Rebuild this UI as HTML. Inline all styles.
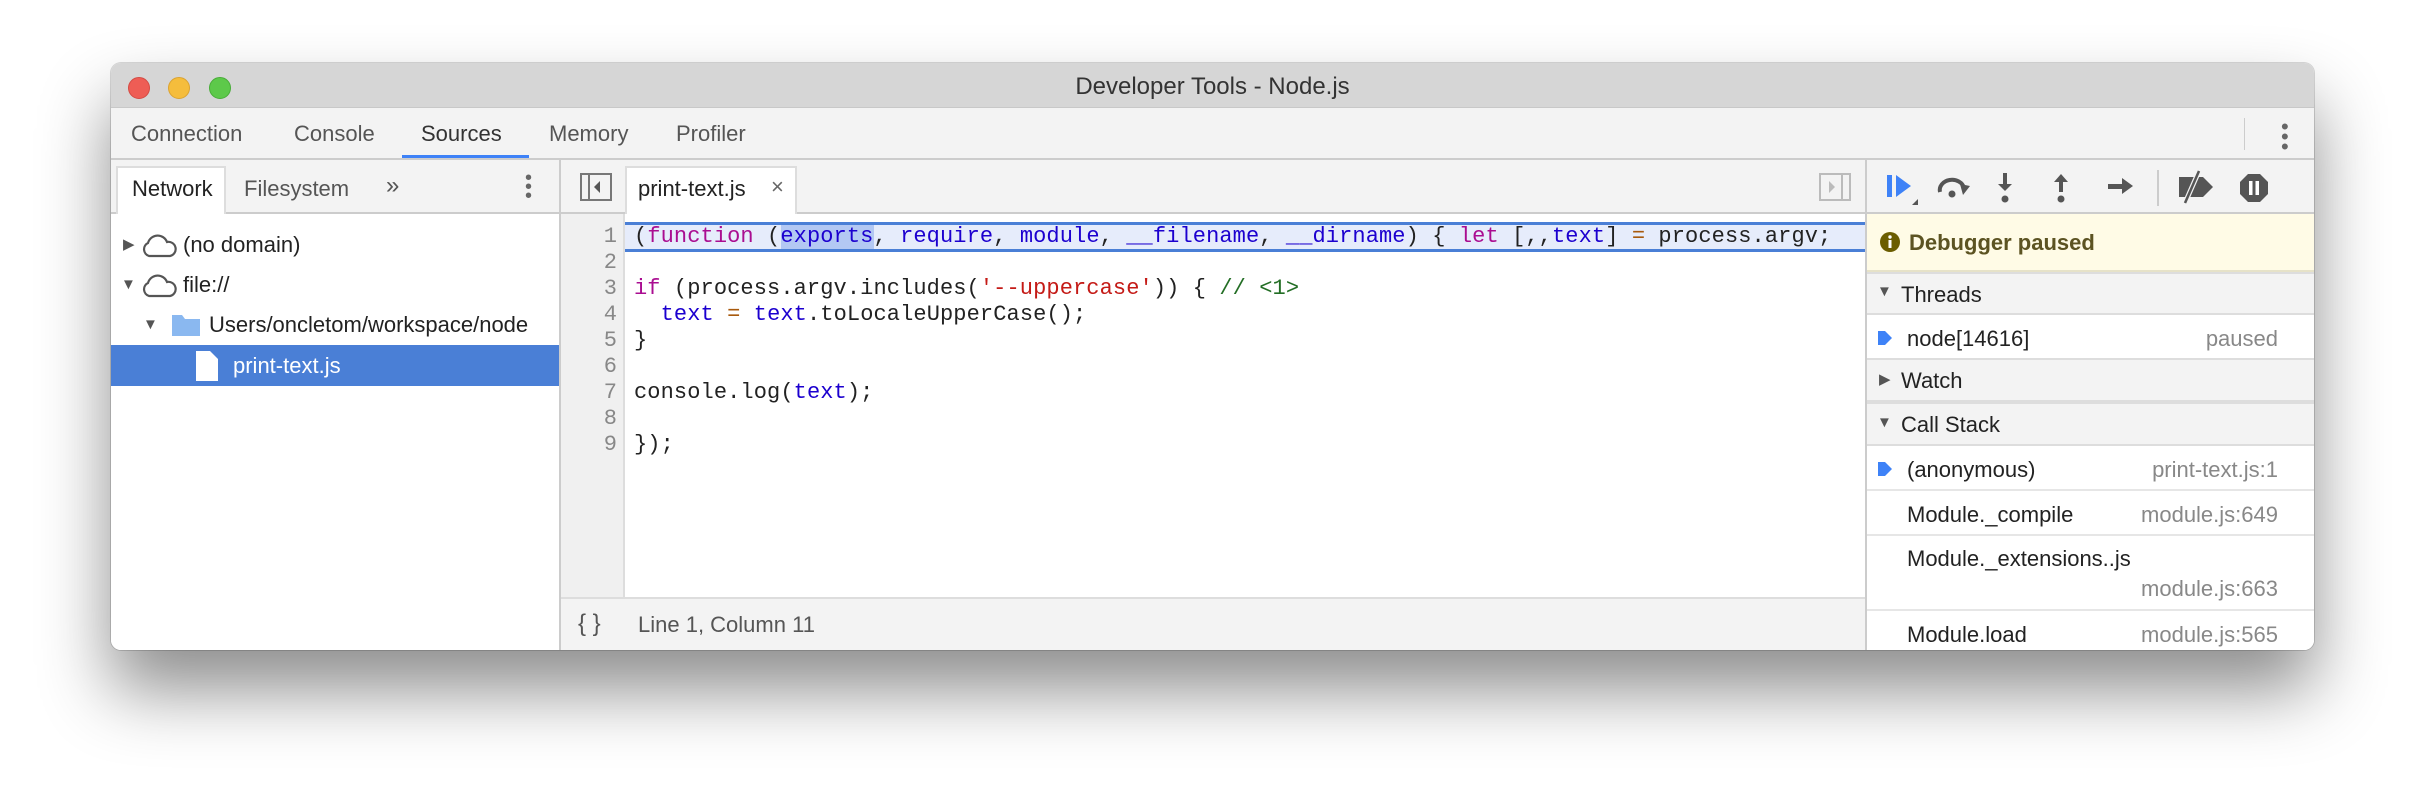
<!DOCTYPE html>
<html><head><style>
*{margin:0;padding:0;box-sizing:border-box}
body{width:2426px;height:810px;background:#fff;position:relative;overflow:hidden;font-family:"Liberation Sans",sans-serif;color:#222}
.win{position:absolute;left:111px;top:63px;width:2203px;height:587px;border-radius:10px;overflow:hidden;background:#fff;box-shadow:0 40px 70px rgba(0,0,0,.45),0 0 0 1px rgba(0,0,0,.15)}
.abs{position:absolute}
.title{left:0;top:0;width:100%;height:45px;background:#d6d6d6;border-bottom:1px solid #c8c8c8}
.dot{position:absolute;top:14px;width:22px;height:22px;border-radius:50%}
.tabs{left:0;top:45px;width:100%;height:52px;background:#f3f3f3;border-bottom:2px solid #ccc;font-size:22px;color:#555}
.tabs span{position:absolute;top:13px}
.side{left:0;top:97px;width:450px;height:490px;border-right:2px solid #ccc;background:#fff}
.stb{left:0;top:0;width:100%;height:54px;background:#f3f3f3;border-bottom:2px solid #ccc;font-size:22px}
.row{position:absolute;left:0;width:100%;height:41px;font-size:22px;line-height:41px}
.ed{left:450px;top:97px;width:1304px;height:490px;background:#fff}
.code{font-family:"Liberation Mono",monospace;font-size:22px;letter-spacing:0.1px;line-height:26px;white-space:pre}
.k{color:#aa0d91}.v{color:#1c00cf}.s{color:#c41a16}.c{color:#236e25}.o{color:#a85a0d}
.rp{left:1754px;top:97px;width:449px;height:490px;border-left:2px solid #ccc;background:#fff;font-size:22px}
.hdr{position:absolute;left:0;width:100%;background:#f3f3f3;border-bottom:2px solid #ddd;border-top:2px solid #ddd}
.it{position:absolute;left:0;width:100%;background:#fff;border-bottom:2px solid #e6e6e6}
.gr{color:#888}
</style></head><body>
<div class="win">
  <div class="abs title">
    <div class="dot" style="left:17px;background:#ee5d55;border:1px solid #d44b43"></div>
    <div class="dot" style="left:57px;background:#f5bd3c;border:1px solid #dba331"></div>
    <div class="dot" style="left:98px;background:#5dc94a;border:1px solid #48ad38"></div>
    <div class="abs" style="left:0;width:100%;top:10px;text-align:center;font-size:24px;color:#333">Developer Tools - Node.js</div>
  </div>
  <div class="abs tabs">
    <span style="left:20px">Connection</span><span style="left:183px">Console</span>
    <span style="left:310px;color:#333">Sources</span><span style="left:438px">Memory</span><span style="left:565px">Profiler</span>
    <div class="abs" style="left:291px;top:47px;width:127px;height:3px;background:#3e82f7"></div>
    <div class="abs" style="left:2133px;top:10px;width:1px;height:32px;background:#ccc"></div>
    <div class="abs" style="left:2170px;top:14px;font-size:22px;line-height:10px;color:#666">•<br>•<br>•</div>
  </div>
  <div class="abs side">
    <div class="abs stb">
      <div class="abs" style="left:5px;top:6px;width:110px;height:48px;background:#fff;border:2px solid #ddd;border-bottom:none"></div>
      <span class="abs" style="left:21px;top:16px;color:#222">Network</span>
      <span class="abs" style="left:133px;top:16px;color:#555">Filesystem</span>
      <span class="abs" style="left:275px;top:12px;color:#555;font-size:24px">»</span>
      <div class="abs" style="left:414px;top:14px;font-size:20px;line-height:9px;color:#666">•<br>•<br>•</div>
    </div>
    <div class="row" style="top:64px"><span class="abs" style="left:12px;font-size:15px;color:#555">▶</span>
      <svg class="abs" style="left:30px;top:10px" width="36" height="24" viewBox="0 0 36 24"><path d="M8 22 A7 7 0 0 1 7 9 A10 10 0 0 1 26 8 A7 7 0 0 1 29 22 Z" fill="none" stroke="#555" stroke-width="2.2"/></svg>
      <span class="abs" style="left:72px">(no domain)</span></div>
    <div class="row" style="top:104px"><span class="abs" style="left:10px;font-size:15px;color:#555">▼</span>
      <svg class="abs" style="left:30px;top:10px" width="36" height="24" viewBox="0 0 36 24"><path d="M8 22 A7 7 0 0 1 7 9 A10 10 0 0 1 26 8 A7 7 0 0 1 29 22 Z" fill="none" stroke="#555" stroke-width="2.2"/></svg>
      <span class="abs" style="left:72px">file://</span></div>
    <div class="row" style="top:144px"><span class="abs" style="left:32px;font-size:15px;color:#555">▼</span>
      <svg class="abs" style="left:60px;top:9px" width="30" height="24" viewBox="0 0 30 24"><path d="M1 2 H11 L14 6 H29 V23 H1 Z" fill="#8ab8f0"/></svg>
      <span class="abs" style="left:98px;white-space:nowrap">Users/oncletom/workspace/node</span></div>
    <div class="row" style="top:185px;background:#4a7fd6;color:#fff"><svg class="abs" style="left:84px;top:5px" width="24" height="32" viewBox="0 0 24 32"><path d="M1 1 H15 L23 9 V31 H1 Z" fill="#fff"/></svg>
      <span class="abs" style="left:122px">print-text.js</span></div>
  </div>
  <div class="abs ed">
    <div class="abs" style="left:0;top:0;width:100%;height:54px;background:#f3f3f3;border-bottom:2px solid #ccc">
      <svg class="abs" style="left:19px;top:13px" width="32" height="28" viewBox="0 0 32 28"><rect x="1" y="1" width="30" height="26" fill="none" stroke="#777" stroke-width="2"/><line x1="9" y1="1" x2="9" y2="27" stroke="#777" stroke-width="2"/><path d="M20 8 L14 14 L20 20Z" fill="#555"/></svg>
      <div class="abs" style="left:64px;top:6px;width:172px;height:48px;background:#fff;border:2px solid #ddd;border-bottom:none"></div>
      <span class="abs" style="left:77px;top:16px;font-size:22px">print-text.js</span>
      <span class="abs" style="left:210px;top:14px;font-size:22px;color:#666">×</span>
      <svg class="abs" style="left:1258px;top:13px" width="32" height="28" viewBox="0 0 32 28"><rect x="1" y="1" width="30" height="26" fill="none" stroke="#bbb" stroke-width="2"/><line x1="23" y1="1" x2="23" y2="27" stroke="#bbb" stroke-width="2"/><path d="M10 8 L16 14 L10 20Z" fill="#bbb"/></svg>
    </div>
    <div class="abs" style="left:0;top:54px;width:64px;height:383px;background:#f0f0f0;border-right:2px solid #ddd"></div>
    <div class="abs" style="left:64px;top:62px;width:1240px;height:30px;background:#e6ecfb;border-top:3px solid #4a7fd6;border-bottom:3px solid #4a7fd6"></div>
    <div class="abs" style="left:220px;top:65px;width:93px;height:24px;background:#b3c8f3"></div>
    <div class="abs code" style="left:0;top:64px;width:56px;text-align:right;color:#888">1
2
3
4
5
6
7
8
9</div>
    <div class="abs code" style="left:73px;top:64px;color:#222">(<span class="k">function</span> (<span class="v">exports</span>, <span class="v">require</span>, <span class="v">module</span>, <span class="v">__filename</span>, <span class="v">__dirname</span>) { <span class="k">let</span> [,,<span class="v">text</span>] <span class="o">=</span> process.argv;

<span class="k">if</span> (process.argv.includes(<span class="s">'--uppercase'</span>)) { <span class="c">// &lt;1&gt;</span>
  <span class="v">text</span> <span class="o">=</span> <span class="v">text</span>.toLocaleUpperCase();
}

console.log(<span class="v">text</span>);

});</div>
    <div class="abs" style="left:0;top:437px;width:100%;height:53px;background:#f3f3f3;border-top:2px solid #ddd;font-size:22px;color:#555">
      <span class="abs" style="left:17px;top:11px;font-size:24px">{ }</span>
      <span class="abs" style="left:77px;top:13px">Line 1, Column 11</span></div>
  </div>
  <div class="abs rp">
    <div class="abs" style="left:0;top:0;width:100%;height:54px;background:#f3f3f3;border-bottom:2px solid #ccc">
      <svg class="abs" style="left:18px;top:12px" width="36" height="34" viewBox="0 0 36 34"><rect x="2" y="3" width="5" height="22" fill="#3e82f7"/><path d="M11 3 L26 14 L11 25Z" fill="#3e82f7"/><path d="M33 27 V33 H27Z" fill="#555"/></svg>
      <svg class="abs" style="left:69px;top:16px" width="36" height="24" viewBox="0 0 36 24"><path d="M4 16 A12 10 0 0 1 28 12" fill="none" stroke="#555" stroke-width="4"/><path d="M24 8 L34 10 L27 19Z" fill="#555"/><circle cx="16" cy="18" r="3.5" fill="#555"/></svg>
      <svg class="abs" style="left:130px;top:12px" width="16" height="32" viewBox="0 0 16 32"><rect x="6" y="1" width="4" height="14" fill="#555"/><path d="M1 12 L15 12 L8 19Z" fill="#555"/><circle cx="8" cy="27" r="3.5" fill="#555"/></svg>
      <svg class="abs" style="left:186px;top:12px" width="16" height="32" viewBox="0 0 16 32"><rect x="6" y="8" width="4" height="12" fill="#555"/><path d="M1 10 L15 10 L8 2Z" fill="#555"/><circle cx="8" cy="27" r="3.5" fill="#555"/></svg>
      <svg class="abs" style="left:240px;top:16px" width="28" height="20" viewBox="0 0 28 20"><rect x="1" y="8" width="16" height="5" fill="#555"/><path d="M15 2 L26 10 L15 18Z" fill="#555"/></svg>
      <div class="abs" style="left:290px;top:10px;width:2px;height:36px;background:#ccc"></div>
      <svg class="abs" style="left:310px;top:9px" width="38" height="36" viewBox="0 0 38 36"><path d="M2 8 H26 L36 18 L26 28 H2Z" fill="#555"/><line x1="22" y1="2" x2="8" y2="34" stroke="#f3f3f3" stroke-width="5"/><line x1="22" y1="2" x2="8" y2="34" stroke="#555" stroke-width="2.5"/></svg>
      <svg class="abs" style="left:372px;top:13px" width="30" height="30" viewBox="0 0 30 30"><path d="M9 1 H21 L29 9 V21 L21 29 H9 L1 21 V9Z" fill="#555"/><rect x="10" y="8" width="3.5" height="14" fill="#fff"/><rect x="16.5" y="8" width="3.5" height="14" fill="#fff"/></svg>
    </div>
    <div class="abs" style="left:0;top:54px;width:100%;height:58px;background:#fffbe6;border-bottom:2px solid #e6e2c8">
      <svg class="abs" style="left:12px;top:17px" width="22" height="22" viewBox="0 0 22 22"><circle cx="11" cy="11" r="10" fill="#6b5d00"/><rect x="9.5" y="9" width="3" height="8" fill="#fff"/><circle cx="11" cy="6" r="1.7" fill="#fff"/></svg>
      <span class="abs" style="left:42px;top:16px;font-weight:bold;color:#5c5322">Debugger paused</span></div>
    <div class="hdr" style="top:112px;height:43px"><span class="abs" style="left:10px;top:9px;font-size:15px;color:#555">▼</span><span class="abs" style="left:34px;top:8px">Threads</span></div>
    <div class="it" style="top:155px;height:45px"><svg class="abs" style="left:10px;top:14px" width="16" height="18" viewBox="0 0 16 18"><path d="M1 2 H8 L15 9 L8 16 H1Z" fill="#3e82f7"/></svg><span class="abs" style="left:40px;top:11px">node[14616]</span><span class="abs gr" style="right:36px;top:11px">paused</span></div>
    <div class="hdr" style="top:198px;height:44px"><span class="abs" style="left:12px;top:10px;font-size:15px;color:#555">▶</span><span class="abs" style="left:34px;top:8px">Watch</span></div>
    <div class="hdr" style="top:242px;height:44px"><span class="abs" style="left:10px;top:10px;font-size:15px;color:#555">▼</span><span class="abs" style="left:34px;top:8px">Call Stack</span></div>
    <div class="it" style="top:286px;height:45px"><svg class="abs" style="left:10px;top:14px" width="16" height="18" viewBox="0 0 16 18"><path d="M1 2 H8 L15 9 L8 16 H1Z" fill="#3e82f7"/></svg><span class="abs" style="left:40px;top:11px">(anonymous)</span><span class="abs gr" style="right:36px;top:11px">print-text.js:1</span></div>
    <div class="it" style="top:331px;height:45px"><span class="abs" style="left:40px;top:11px">Module._compile</span><span class="abs gr" style="right:36px;top:11px">module.js:649</span></div>
    <div class="it" style="top:376px;height:75px"><span class="abs" style="left:40px;top:10px">Module._extensions..js</span><span class="abs gr" style="right:36px;top:40px">module.js:663</span></div>
    <div class="it" style="top:451px;height:45px;border:none"><span class="abs" style="left:40px;top:11px">Module.load</span><span class="abs gr" style="right:36px;top:11px">module.js:565</span></div>
  </div>
</div>
</body></html>
